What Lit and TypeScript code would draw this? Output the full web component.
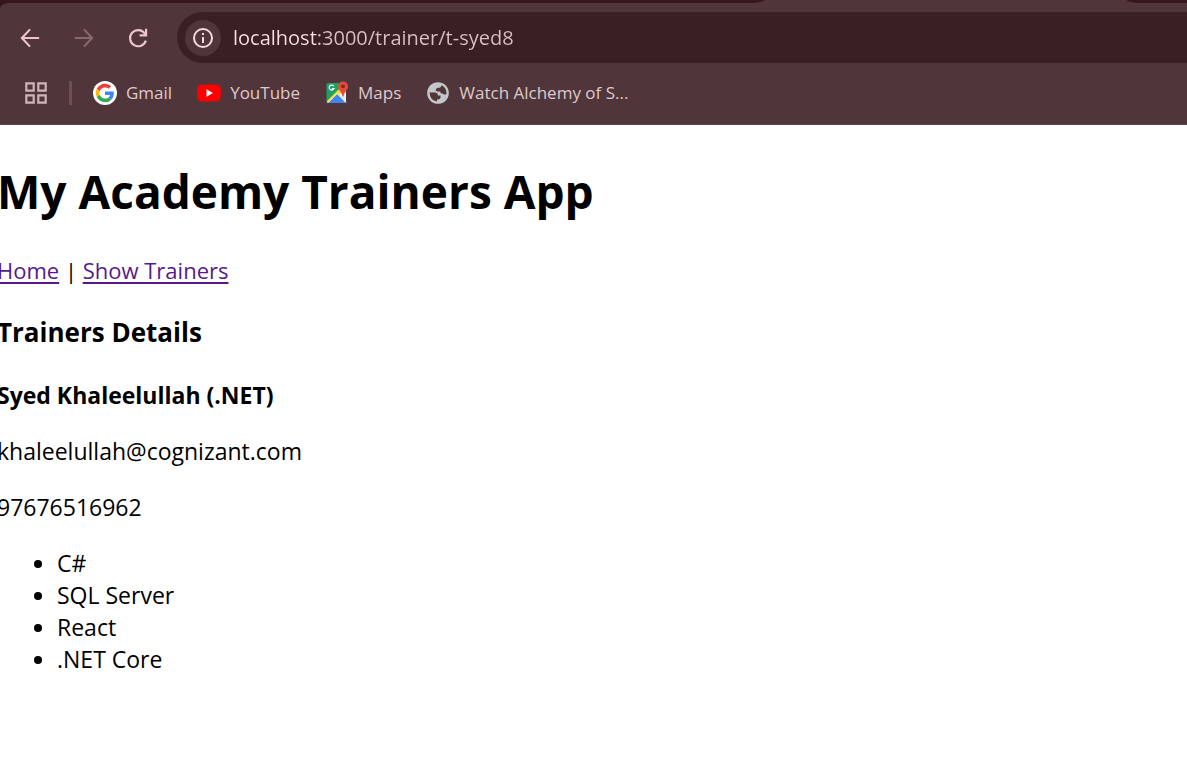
import { LitElement, html, css, svg } from "lit";
import { customElement, property } from "lit/decorators.js";

const backIcon = svg`<path d="M12 4 4.500 12l7.500 8M4.500 12h16" fill="none" stroke="currentColor" stroke-width="2"/>`;
const forwardIcon = svg`<path d="M12 4l7.500 8-7.500 8M19.500 12h-16" fill="none" stroke="currentColor" stroke-width="2"/>`;
const reloadIcon = svg`<path d="M19.300 14.400A7.500 7.500 0 1 1 18.200 7.700L19 9M13.500 9.500h6V3.500" fill="none" stroke="currentColor" stroke-width="2"/>`;

@customElement("browser-chrome")
class BrowserChrome extends LitElement {
  @property() url = "";
  static styles = css`
    :host {
      display: block;
      background: #35171c;
      color: #dfc9cb;
      font-family: "Open Sans", "Noto Sans", sans-serif;
    }
    .tabs {
      display: grid;
      grid-template-columns: 764px 363px 1fr;
      height: 3px;
      background: linear-gradient(90deg, #35171c 700px, #50363a 700px);
    }
    .tab-before {
      background: #35171c;
      border-bottom-right-radius: 12px 3px;
    }
    .tab-after {
      background: #35171c;
      border-bottom-left-radius: 12px 3px;
    }
    .toolbar {
      padding-top: 9px;
      background: #50363a;
      border-top-left-radius: 9px 6px;
      border-bottom: 1px solid #5f494e;
    }
    .nav {
      display: flex;
      align-items: center;
      height: 51px;
      padding-left: 16px;
    }
    button {
      display: flex;
      padding: 0;
      border: 0;
      background: none;
      color: #ecc6ca;
    }
    button:disabled {
      color: #89686d;
    }
    .controls {
      display: flex;
      gap: 26px;
      margin-right: 25px;
    }
    .address {
      flex: 1;
      display: flex;
      align-items: center;
      gap: 12px;
      height: 51px;
      padding-left: 8px;
      border-radius: 26px 0 0 26px;
      background: #3a2024;
    }
    .info {
      align-items: center;
      justify-content: center;
      width: 36px;
      height: 36px;
      border-radius: 50%;
      background: #50363a;
      color: #f3dcde;
    }
    input {
      flex: 1;
      min-width: 0;
      padding: 0;
      border: 0;
      outline: 0;
      font: 20px/32px "Open Sans", "Noto Sans", sans-serif;
      color: transparent;
      background: linear-gradient(90deg, #fbe3e5 84px, #d8c2c4 84px);
      background-clip: text;
      -webkit-background-clip: text;
    }
    .bookmarks {
      display: flex;
      align-items: center;
      height: 60px;
      padding: 0 0 1px 24px;
      box-sizing: content-box;
    }
    .apps {
      color: #ccb6b8;
    }
    .separator {
      width: 3px;
      height: 24px;
      margin: 0 21px;
      background: #6b4f54;
    }
    .links {
      display: flex;
      gap: 25px;
    }
    a {
      display: flex;
      align-items: center;
      gap: 9px;
      font-size: 17px;
      line-height: 24px;
      color: inherit;
      text-decoration: none;
      white-space: nowrap;
    }
  `;

  render() {
    return html`
      <div class="tabs">
        <div class="tab-before"></div>
        <div></div>
        <div class="tab-after"></div>
      </div>
      <div class="toolbar">
        <div class="nav">
          <div class="controls">
            <button aria-label="Back"><svg width="28" height="28" viewBox="-1 -1 26 26">${backIcon}</svg></button>
            <button aria-label="Forward" disabled><svg width="28" height="28" viewBox="-1 -1 26 26">${forwardIcon}</svg></button>
            <button aria-label="Reload"><svg width="28" height="28" viewBox="-1 -1 26 26">${reloadIcon}</svg></button>
          </div>
          <div class="address">
            <button class="info" aria-label="View site information">
              <svg width="22" height="22" viewBox="0 0 22 22">
                <circle cx="11" cy="11" r="9" fill="none" stroke="currentColor" stroke-width="2" />
                <path d="M10 10h2v6h-2zM10 6h2v2h-2z" fill="currentColor" />
              </svg>
            </button>
            <input type="text" aria-label="Address" spellcheck="false" .value=${this.url} />
          </div>
        </div>
        <div class="bookmarks">
          <button class="apps" aria-label="Apps">
            <svg width="24" height="24" viewBox="0 0 24 24" fill="none" stroke="currentColor" stroke-width="2.200">
              <path d="M2.300 2.300h7.400v7.400H2.300zM14.300 2.300h7.400v7.400h-7.400zM2.300 14.300h7.400v7.400H2.300zM14.300 14.300h7.400v7.400h-7.400z" />
            </svg>
          </button>
          <div class="separator"></div>
          <div class="links">
            <a href="#gmail">
              <svg width="24" height="24" viewBox="0 0 24 24">
                <circle cx="12" cy="12" r="12" fill="#fff" />
                <g transform="translate(2.800 2.800) scale(.383)">
                  <path fill="#EA4335" d="M24 9.500c3.540 0 6.710 1.220 9.210 3.600l6.850-6.850C35.900 2.380 30.470 0 24 0 14.620 0 6.510 5.380 2.560 13.220l7.980 6.190C12.430 13.720 17.740 9.500 24 9.500z" />
                  <path fill="#4285F4" d="M46.980 24.550c0-1.570-.15-3.090-.38-4.550H24v9.020h12.940c-.58 2.960-2.260 5.480-4.780 7.180l7.730 6c4.510-4.180 7.090-10.360 7.090-17.650z" />
                  <path fill="#FBBC05" d="M10.530 28.590c-.48-1.450-.76-2.990-.76-4.590s.27-3.140.76-4.590l-7.980-6.190C.92 16.460 0 20.120 0 24c0 3.880.92 7.540 2.560 10.780l7.970-6.190z" />
                  <path fill="#34A853" d="M24 48c6.480 0 11.930-2.130 15.890-5.810l-7.730-6c-2.150 1.450-4.920 2.300-8.160 2.300-6.260 0-11.570-4.220-13.470-9.910l-7.980 6.190C6.510 42.620 14.620 48 24 48z" />
                </g>
              </svg>
              <span>Gmail</span>
            </a>
            <a href="#youtube">
              <svg width="24" height="24" viewBox="0 0 24 24">
                <path d="M4 3.800Q12 3 20 3.800q3 .3 3.500 3.200.8 5 0 10-.5 2.900-3.500 3.200-8 .8-16 0Q1 19.900.5 17q-.8-5 0-10Q1 4.100 4 3.800z" fill="#f00" />
                <path d="M9.500 8.300v7.400l6.500-3.700z" fill="#fff" />
              </svg>
              <span>YouTube</span>
            </a>
            <a href="#maps">
              <svg width="24" height="24" viewBox="0 0 24 24">
                <path d="M3 2h18v18a2 2 0 0 1-2 2H3a1.500 1.500 0 0 1-1.500-1.500v-17A1.500 1.500 0 0 1 3 2z" fill="#1da261" />
                <path d="M12 11.500 21 21V4l-5 5z" fill="#d5d8dc" />
                <path d="m12 12 9 10V11l-4-3z" fill="#eceff1" />
                <path d="m2 20 13-13 3 3L5 22H3q-1 0-1-2z" fill="#fdd835" />
                <path d="m12 13 9 9H3z" fill="#4285f4" />
                <path d="m3 21.500 9-9 9 9" fill="none" stroke="#f7f3da" stroke-width="1" />
                <path d="M8.800 5.200A2.500 2.500 0 1 0 9 7.500H6.800" fill="none" stroke="#fff" stroke-width="1.200" />
                <path d="M18 .5a5 5 0 0 1 5 5c0 4-4 5-4.500 10h-1C17 10.500 13 9.500 13 5.500a5 5 0 0 1 5-5z" fill="#e64a3d" />
                <circle cx="18" cy="5.300" r="1.900" fill="#7d2820" />
              </svg>
              <span>Maps</span>
            </a>
            <a href="#watch">
              <svg width="24" height="24" viewBox="0 0 24 24">
                <circle cx="12" cy="12" r="10.800" fill="#c5c6cb" />
                <path d="M3.500 11.500h6q2.500.3 2.500 3h2.500v2.500q-1 1.500-3.500 1.500v2Q4 19.500 3.500 11.500z" fill="#50363a" />
                <path d="M15.500 4.200q-.5 2.600-3.500 2.600-2.200.4-2.200 2.200 0 1.600 2.200 1.600h1.600q1.200.2 1.200 1.800h2q.8 1.800 3.700.8Q21 7 15.500 4.200z" fill="#50363a" />
              </svg>
              <span>Watch Alchemy of S...</span>
            </a>
          </div>
        </div>
      </div>
    `;
  }
}

@customElement("app-root")
class AppRoot extends LitElement {
  private skills = ["C#", "SQL Server", "React", ".NET Core"];

  static styles = css`
    :host {
      display: block;
      min-height: 100vh;
      background: #fff;
      color: #000;
      font: 23px/32px "Open Sans", "Noto Sans", sans-serif;
    }
    main {
      margin-left: -3px;
      padding-top: 34px;
    }
    h1 {
      margin: 0 0 31px;
      font-size: 46px;
      line-height: 64px;
    }
    nav {
      margin-bottom: 28px;
      font-size: 22px;
    }
    a {
      color: #551a8b;
      text-decoration-thickness: 2px;
      text-underline-offset: 3px;
    }
    h3 {
      margin: 0 0 28px;
      font-size: 26px;
      line-height: 37px;
    }
    h4 {
      margin: 0 0 24px;
      font-size: 23px;
    }
    p {
      margin: 0 0 24px;
    }
    ul {
      margin: 0;
      padding-left: 60px;
    }
  `;

  render() {
    return html`
      <browser-chrome url="localhost:3000/trainer/t-syed8"></browser-chrome>
      <main>
        <h1>My Academy Trainers App</h1>
        <nav><a href="#home">Home</a> | <a href="#trainers">Show Trainers</a></nav>
        <h3>Trainers Details</h3>
        <h4>Syed Khaleelullah (.NET)</h4>
        <p>khaleelullah@cognizant.com</p>
        <p>97676516962</p>
        <ul>
          ${this.skills.map((skill) => html`<li>${skill}</li>`)}
        </ul>
      </main>
    `;
  }
}
